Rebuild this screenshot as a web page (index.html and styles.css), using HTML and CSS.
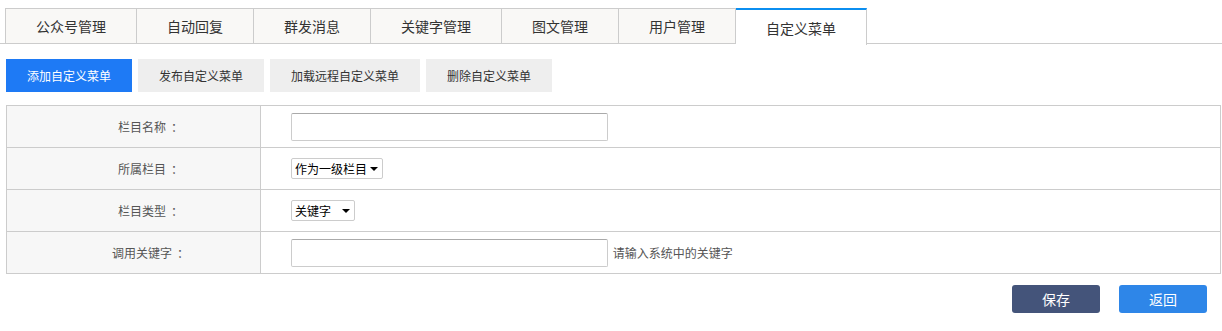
FILE: index.html
```html
<!DOCTYPE html>
<html lang="zh-CN">
  <head>
    <meta charset="UTF-8" />
    <meta name="viewport" content="width=device-width, initial-scale=1.0" />
    <title>自定义菜单</title>
    <link rel="stylesheet" href="styles.css">
  </head>
  <body>
    <ul class="tabs">
      <li class="tab">公众号管理</li>
      <li class="tab">自动回复</li>
      <li class="tab">群发消息</li>
      <li class="tab">关键字管理</li>
      <li class="tab">图文管理</li>
      <li class="tab">用户管理</li>
      <li class="tab active">自定义菜单</li>
    </ul>

    <div class="content">
      <div class="toolbar">
        <button class="tool-btn primary">添加自定义菜单</button>
        <button class="tool-btn">发布自定义菜单</button>
        <button class="tool-btn wide">加载远程自定义菜单</button>
        <button class="tool-btn">删除自定义菜单</button>
      </div>

      <form id="menuForm">
        <table class="form-table">
          <colgroup>
            <col class="label-col" />
            <col />
          </colgroup>
          <tr>
            <td class="label">栏目名称<span class="colon">：</span></td>
            <td class="field"><input type="text" class="text-input" name="name" /></td>
          </tr>
          <tr>
            <td class="label">所属栏目<span class="colon">：</span></td>
            <td class="field">
              <span class="select-wrap">
                <select class="select parent-select" name="parent">
                  <option>作为一级栏目</option>
                </select>
              </span>
            </td>
          </tr>
          <tr>
            <td class="label">栏目类型<span class="colon">：</span></td>
            <td class="field">
              <span class="select-wrap">
                <select class="select type-select" name="type">
                  <option>关键字</option>
                  <option>链接</option>
                </select>
              </span>
            </td>
          </tr>
          <tr>
            <td class="label">调用关键字<span class="colon">：</span></td>
            <td class="field">
              <input type="text" class="text-input" name="keyword" />
              <span class="hint">请输入系统中的关键字</span>
            </td>
          </tr>
        </table>

        <div class="actions">
          <button type="submit" class="action-btn save">保存</button>
          <button type="button" class="action-btn back">返回</button>
        </div>
      </form>
    </div>
  </body>
</html>
```

FILE: styles.css
```css
body {
  margin: 0;
  font-family: "Noto Sans CJK SC", "Microsoft YaHei", sans-serif;
  font-size: 12px;
  color: #333;
  background: #ffffff;
}

.tabs {
  display: flex;
  list-style: none;
  margin: 0;
  padding: 8px 0 0 5px;
  border-bottom: 1px solid #cccccc;
}

.tab {
  height: 34px;
  line-height: 34px;
  padding: 0 30px;
  font-size: 14px;
  color: #333;
  background: #f9f8f6;
  border-top: 1px solid #cccccc;
  border-right: 1px solid #cccccc;
  margin-bottom: -1px;
}

.tab:first-child {
  border-left: 1px solid #cccccc;
}

.tab.active {
  background: #ffffff;
  border-top: 2px solid #0b8ef0;
  height: 34px;
  line-height: 36px;
  padding-bottom: 1px;
  margin-bottom: -2px;
}

.content {
  padding: 15px 1px 0 6px;
}

.toolbar {
  display: flex;
  gap: 6px;
  margin-bottom: 13px;
}

.tool-btn {
  width: 126px;
  height: 33px;
  padding: 0;
  border: none;
  background: #eeeeee;
  color: #333;
  font-family: inherit;
  font-size: 12px;
  cursor: pointer;
}

.tool-btn.wide {
  width: 150px;
}

.tool-btn.primary {
  background: #1e7af5;
  color: #ffffff;
}

.form-table {
  width: 100%;
  border-collapse: collapse;
  table-layout: fixed;
}

.label-col {
  width: 254px;
}

.form-table td {
  height: 41px;
  border: 1px solid #cccccc;
  padding: 0;
}

.label {
  background: #f7f7f7;
  text-align: center;
  padding-left: 34px !important;
  color: #555;
}

.colon {
  margin-left: 5px;
}

.field {
  padding-left: 30px !important;
}

.text-input {
  box-sizing: border-box;
  width: 317px;
  height: 28px;
  border: 1px solid #cccccc;
  border-top-color: #aaaaaa;
  border-radius: 2px;
  padding: 0 6px;
  vertical-align: middle;
  font-family: inherit;
}

.select-wrap {
  position: relative;
  display: inline-block;
  vertical-align: middle;
}

.select-wrap::after {
  content: "";
  position: absolute;
  right: 5px;
  top: 9px;
  border-left: 4px solid transparent;
  border-right: 4px solid transparent;
  border-top: 4px solid #000;
  pointer-events: none;
}

.select {
  display: block;
  box-sizing: border-box;
  height: 21px;
  padding: 0 0 0 3px;
  border: 1px solid #cccccc;
  border-radius: 2px;
  background: #ffffff;
  color: #000;
  font-family: inherit;
  font-size: 12px;
  appearance: none;
  -webkit-appearance: none;
}

.parent-select {
  width: 92px;
}

.type-select {
  width: 64px;
}

.hint {
  margin-left: 2px;
  color: #555;
  vertical-align: middle;
}

.actions {
  display: flex;
  justify-content: flex-end;
  gap: 19px;
  margin-top: 11px;
  padding-right: 14px;
}

.action-btn {
  width: 88px;
  height: 28px;
  border: none;
  border-radius: 3px;
  color: #ffffff;
  font-family: inherit;
  font-size: 14px;
  cursor: pointer;
}

.action-btn.save {
  background: #44547a;
}

.action-btn.back {
  background: #2e86e8;
}
```
